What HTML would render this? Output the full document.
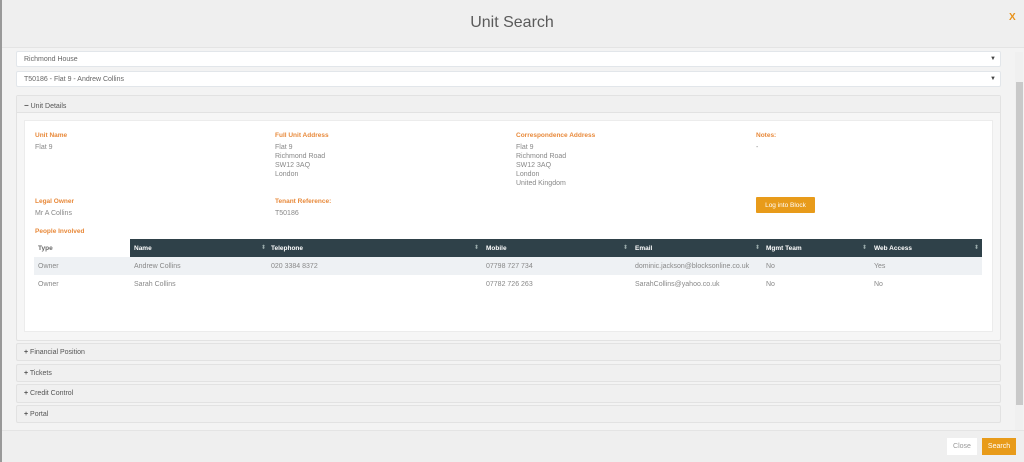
<!DOCTYPE html>
<html><head><meta charset="utf-8"><style>
*{margin:0;padding:0;box-sizing:border-box}
body{width:1024px;height:462px;overflow:hidden;background:#f3f3f3;font-family:"Liberation Sans",sans-serif;position:relative;color:#777}
.a{position:absolute}
.hdr{left:0;top:0;width:1024px;height:48px;background:#efefef;border-bottom:1px solid #e4e4e4}
.ttl{left:0;width:1024px;top:14px;text-align:center;font-size:16px;color:#5a5a5a}
.sel{left:16px;width:985px;height:16px;background:#fff;border:1px solid #e2e6ea;border-radius:2px;font-size:7px;color:#666;padding:4px 0 0 7px}
.sel i{position:absolute;right:4px;top:4px;font-style:normal;font-size:6px;color:#444}
.pan{left:16px;width:985px;background:#f0f0f0;border:1px solid #e2e2e2;border-radius:2px;font-size:7px;color:#555;padding:5px 0 0 7px}
.lb{font-size:6.5px;font-weight:bold;color:#e8893a}
.v{font-size:7px;color:#888;line-height:9px}
.th{top:239px;height:18px;background:#2f4149}
.hd{font-size:6.5px;font-weight:bold;color:#fff;top:245px}
.c{font-size:7px;color:#888}
.s{font-size:6px;color:#9aa;top:244px}
</style></head><body>
<div class="a hdr"></div>
<div class="a" style="left:0;top:0;width:2px;height:462px;background:#999"></div>
<div class="a ttl">Unit Search</div>
<div class="a" style="left:1009px;top:12px;color:#e8921a;font-weight:bold;font-size:10px">X</div>
<div class="a" style="left:1015px;top:52px;width:8px;height:378px;background:#f0f0f0"></div>
<div class="a" style="left:1016px;top:82px;width:7px;height:323px;background:#c9c9c9"></div>
<div class="a sel" style="top:51px">Richmond House<i>▼</i></div>
<div class="a sel" style="top:71px">T50186 - Flat 9 - Andrew Collins<i>▼</i></div>
<div class="a pan" style="top:95px;height:246px;background:#f6f6f6"><div style="position:absolute;left:0;top:0;width:983px;height:17px;background:#f0f0f0;border-bottom:1px solid #e2e2e2;padding:5px 0 0 7px"><b style="font-size:8px">−</b> Unit Details</div></div>
<div class="a" style="left:24px;top:120px;width:969px;height:212px;background:#fff;border:1px solid #ececec"></div>
<div class="a lb" style="left:35px;top:132px">Unit Name</div>
<div class="a v" style="left:35px;top:143px">Flat 9</div>
<div class="a lb" style="left:275px;top:132px">Full Unit Address</div>
<div class="a v" style="left:275px;top:143px">Flat 9<br>Richmond Road<br>SW12 3AQ<br>London</div>
<div class="a lb" style="left:516px;top:132px">Correspondence Address</div>
<div class="a v" style="left:516px;top:143px">Flat 9<br>Richmond Road<br>SW12 3AQ<br>London<br>United Kingdom</div>
<div class="a lb" style="left:756px;top:132px">Notes:</div>
<div class="a v" style="left:756px;top:143px">-</div>
<div class="a lb" style="left:35px;top:198px">Legal Owner</div>
<div class="a v" style="left:35px;top:209px">Mr A Collins</div>
<div class="a lb" style="left:275px;top:198px">Tenant Reference:</div>
<div class="a v" style="left:275px;top:209px">T50186</div>
<div class="a" style="left:756px;top:197px;width:59px;height:16px;background:#e89b1a;border-radius:1px;color:#fff;font-size:6.5px;text-align:center;padding-top:5px">Log into Block</div>
<div class="a lb" style="left:35px;top:228px">People Involved</div>
<div class="a th" style="left:130px;width:852px"></div>
<div class="a" style="left:34px;top:257px;width:948px;height:18px;background:#eef1f4"></div>
<div class="a hd" style="left:38px;color:#666">Type</div>
<div class="a hd" style="left:134px">Name</div>
<div class="a hd" style="left:271px">Telephone</div>
<div class="a hd" style="left:486px">Mobile</div>
<div class="a hd" style="left:635px">Email</div>
<div class="a hd" style="left:766px">Mgmt Team</div>
<div class="a hd" style="left:874px">Web Access</div>
<div class="a s" style="left:261px">⬍</div><div class="a s" style="left:474px">⬍</div><div class="a s" style="left:623px">⬍</div><div class="a s" style="left:755px">⬍</div><div class="a s" style="left:862px">⬍</div><div class="a s" style="left:974px">⬍</div>
<div class="a c" style="left:38px;top:263px">Owner</div><div class="a c" style="left:134px;top:263px">Andrew Collins</div><div class="a c" style="left:271px;top:263px">020 3384 8372</div><div class="a c" style="left:486px;top:263px">07798 727 734</div><div class="a c" style="left:635px;top:263px">dominic.jackson@blocksonline.co.uk</div><div class="a c" style="left:766px;top:263px">No</div><div class="a c" style="left:874px;top:263px">Yes</div>
<div class="a c" style="left:38px;top:281px">Owner</div><div class="a c" style="left:134px;top:281px">Sarah Collins</div><div class="a c" style="left:486px;top:281px">07782 726 263</div><div class="a c" style="left:635px;top:281px">SarahCollins@yahoo.co.uk</div><div class="a c" style="left:766px;top:281px">No</div><div class="a c" style="left:874px;top:281px">No</div>
<div class="a pan" style="top:343px;height:18px"><b>+</b> Financial Position</div>
<div class="a pan" style="top:364px;height:18px"><b>+</b> Tickets</div>
<div class="a pan" style="top:384px;height:19px"><b>+</b> Credit Control</div>
<div class="a pan" style="top:405px;height:18px"><b>+</b> Portal</div>
<div class="a" style="left:2px;top:430px;width:1022px;height:32px;background:#efefef;border-top:1px solid #e4e4e4"></div>
<div class="a" style="left:947px;top:438px;width:30px;height:17px;background:#fff;font-size:7px;color:#999;text-align:center;padding-top:5px">Close</div>
<div class="a" style="left:982px;top:438px;width:34px;height:17px;background:#e89b1a;font-size:7px;color:#fff;text-align:center;padding-top:5px">Search</div>
</body></html>
